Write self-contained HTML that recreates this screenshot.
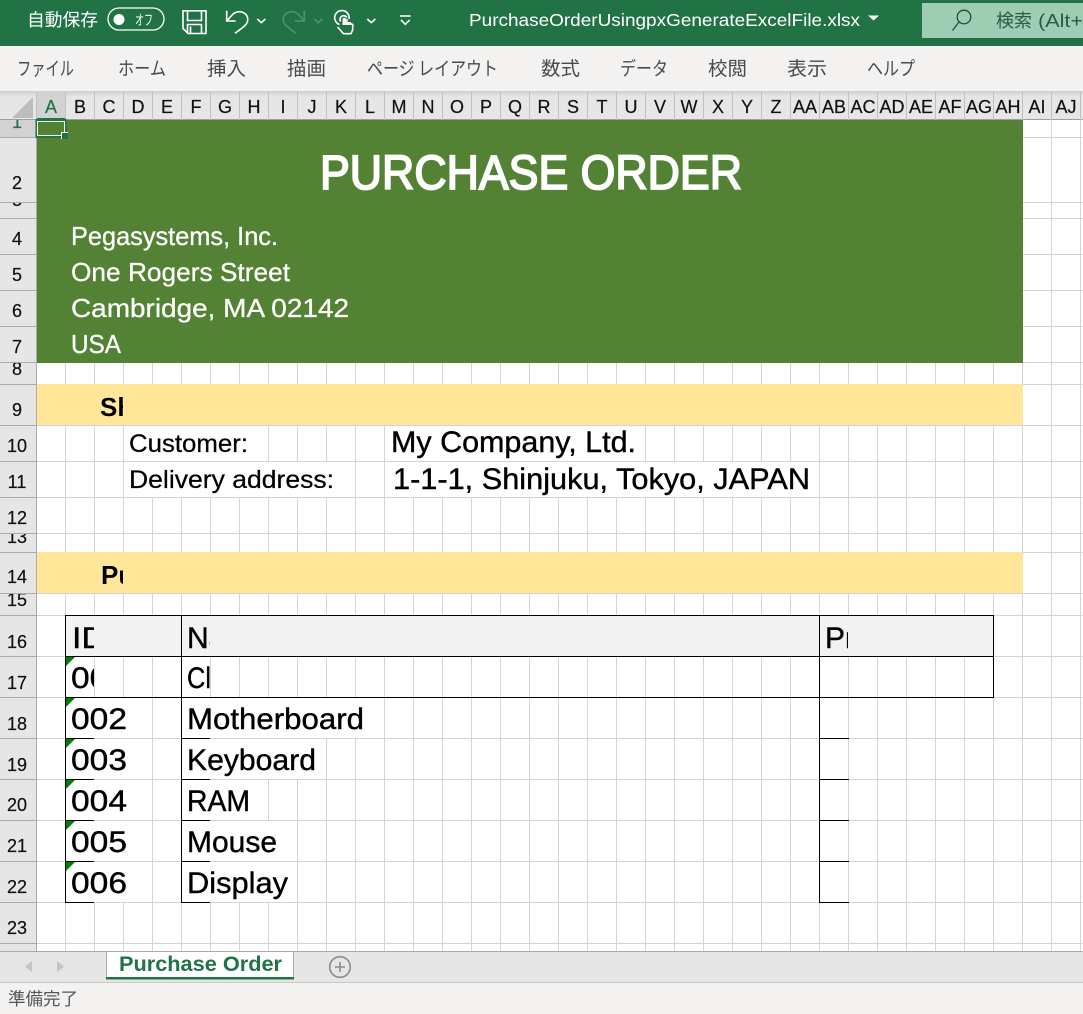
<!DOCTYPE html>
<html lang="ja">
<head>
<meta charset="utf-8">
<title>PurchaseOrderUsingpxGenerateExcelFile.xlsx</title>
<style>
html,body{margin:0;padding:0;background:#fff;width:1083px;height:1014px;overflow:hidden}
svg{display:block}
text{font-family:"Liberation Sans","Noto Sans CJK JP",sans-serif}
.jp{font-family:"Noto Sans CJK JP","Liberation Sans",sans-serif}
.tab{font-size:19px;fill:#4a4a4a;font-weight:400}
.col{font-size:18px;fill:#111;text-anchor:middle;stroke:#111;stroke-width:.2px}
.row{font-size:18px;fill:#111;text-anchor:middle;stroke:#111;stroke-width:.2px}
.addr{font-size:26px;fill:#fff;stroke:#fff;stroke-width:.3px}
.cell{font-size:30px;fill:#000;stroke:#000;stroke-width:.4px}
.lab{font-size:25px;fill:#000;stroke:#000;stroke-width:.25px}
.ico{fill:none;stroke:#fff;stroke-width:1.6}
</style>
</head>
<body>
<svg width="1083" height="1014" viewBox="0 0 1083 1014" xmlns="http://www.w3.org/2000/svg">
<defs>
<pattern id="vg" x="36" y="0" width="29" height="10" patternUnits="userSpaceOnUse"><rect x="29" y="0" width="1" height="10" fill="#d4d4d4"/><rect x="0" y="0" width="1" height="10" fill="#d4d4d4"/></pattern>
<linearGradient id="hd" x1="0" y1="0" x2="0" y2="1"><stop offset="0" stop-color="#cfcfcf"/><stop offset=".2" stop-color="#e6e6e6"/><stop offset="1" stop-color="#e6e6e6"/></linearGradient>
<clipPath id="c-sh"><rect x="95" y="385" width="28" height="40"/></clipPath>
<clipPath id="c-pu"><rect x="95" y="553" width="28" height="40"/></clipPath>
<clipPath id="c-a16"><rect x="66" y="616" width="28" height="40"/></clipPath>
<clipPath id="c-b16"><rect x="182" y="616" width="28" height="40"/></clipPath>
<clipPath id="c-c16"><rect x="820" y="616" width="28" height="40"/></clipPath>
<clipPath id="c-a17"><rect x="66" y="657" width="28" height="40"/></clipPath>
<clipPath id="c-b17"><rect x="182" y="657" width="28" height="40"/></clipPath>
<clipPath id="r1"><rect x="0" y="120" width="36" height="17"/></clipPath>
<clipPath id="r3"><rect x="0" y="203" width="36" height="15"/></clipPath>
<clipPath id="r8"><rect x="0" y="363" width="36" height="21"/></clipPath>
<clipPath id="r13"><rect x="0" y="534" width="36" height="18"/></clipPath>
<clipPath id="r15"><rect x="0" y="594" width="36" height="21"/></clipPath>
<clipPath id="c-search"><rect x="922" y="3" width="161" height="35"/></clipPath>
</defs>

<!-- Sheet grid -->
<rect x="36" y="120" width="1047" height="831" fill="#fff"/>
<rect x="37" y="120" width="1046" height="831" fill="url(#vg)"/>
<path d="M37 137.500H1083M37 202.500H1083M37 218.500H1083M37 254.500H1083M37 290.500H1083M37 326.500H1083M37 362.500H1083M37 384.500H1083M37 425.500H1083M37 461.500H1083M37 497.500H1083M37 533.500H1083M37 552.500H1083M37 593.500H1083M37 615.500H1083M37 656.500H1083M37 697.500H1083M37 738.500H1083M37 779.500H1083M37 820.500H1083M37 861.500H1083M37 902.500H1083M37 943.500H1083" stroke="#d4d4d4" stroke-width="1" fill="none"/>

<!-- Bands -->
<rect x="37" y="120" width="986" height="243" fill="#548235"/>
<rect x="37" y="384" width="986" height="41" fill="#ffe699"/>
<rect x="37" y="552" width="986" height="41" fill="#ffe699"/>

<!-- Overflow cells hide gridlines -->
<rect x="124" y="426" width="144" height="35" fill="#fff"/>
<rect x="124" y="462" width="231" height="35" fill="#fff"/>
<rect x="385" y="426" width="260" height="35" fill="#fff"/>
<rect x="385" y="462" width="434" height="35" fill="#fff"/>
<rect x="66" y="698" width="86" height="40" fill="#fff"/>
<rect x="66" y="739" width="86" height="40" fill="#fff"/>
<rect x="66" y="780" width="86" height="40" fill="#fff"/>
<rect x="66" y="821" width="86" height="40" fill="#fff"/>
<rect x="66" y="862" width="86" height="40" fill="#fff"/>
<rect x="182" y="698" width="181" height="40" fill="#fff"/>
<rect x="182" y="739" width="144" height="40" fill="#fff"/>
<rect x="182" y="780" width="86" height="40" fill="#fff"/>
<rect x="182" y="821" width="115" height="40" fill="#fff"/>
<rect x="182" y="862" width="115" height="40" fill="#fff"/>

<!-- Table -->
<rect x="66" y="616" width="927" height="40" fill="#f2f2f2"/>
<rect x="66" y="657" width="28" height="40" fill="#fff"/>
<rect x="182" y="657" width="28" height="40" fill="#fff"/>
<path d="M65 615.500H994M65 656.500H994M65 697.500H994M65.500 615V903M181.500 615V903M819.500 615V903M993.500 615V698M65 738.500H94M65 779.500H94M65 820.500H94M65 861.500H94M65 902.500H94M181 738.500H210M181 779.500H210M181 820.500H210M181 861.500H210M181 902.500H210M819 738.500H849M819 779.500H849M819 820.500H849M819 861.500H849M819 902.500H849" stroke="#000" stroke-width="1" fill="none"/>
<path d="M66 657h9l-9 9zM66 698h9l-9 9zM66 739h9l-9 9zM66 780h9l-9 9zM66 821h9l-9 9zM66 862h9l-9 9z" fill="#008000"/>

<!-- Sheet text -->
<text x="320" y="189" font-size="48" fill="#fff" stroke="#fff" stroke-width="1.800" textLength="422" lengthAdjust="spacingAndGlyphs">PURCHASE ORDER</text>
<text class="addr" x="71" y="245" textLength="207" lengthAdjust="spacingAndGlyphs">Pegasystems, Inc.</text>
<text class="addr" x="71" y="281" textLength="219" lengthAdjust="spacingAndGlyphs">One Rogers Street</text>
<text class="addr" x="71" y="317" textLength="278" lengthAdjust="spacingAndGlyphs">Cambridge, MA 02142</text>
<text class="addr" x="71" y="353" textLength="50" lengthAdjust="spacingAndGlyphs">USA</text>

<g clip-path="url(#c-sh)"><text x="100" y="416" font-size="26" font-weight="bold" fill="#000">Ship</text></g>
<g clip-path="url(#c-pu)"><text x="101" y="584" font-size="26" font-weight="bold" fill="#000">Pur</text></g>
<text class="lab" x="129" y="452" textLength="119" lengthAdjust="spacingAndGlyphs">Customer:</text>
<text class="lab" x="129" y="488" textLength="205" lengthAdjust="spacingAndGlyphs">Delivery address:</text>
<text class="cell" x="391" y="452" textLength="245" lengthAdjust="spacingAndGlyphs">My Company, Ltd.</text>
<text class="cell" x="393" y="489" textLength="417" lengthAdjust="spacingAndGlyphs">1-1-1, Shinjuku, Tokyo, JAPAN</text>

<g clip-path="url(#c-a16)"><text class="cell" x="72" y="648" textLength="34" lengthAdjust="spacingAndGlyphs">ID</text></g>
<g clip-path="url(#c-b16)"><text class="cell" x="187" y="648">Name</text></g>
<g clip-path="url(#c-c16)"><text class="cell" x="825" y="648">Price</text></g>
<g clip-path="url(#c-a17)"><text class="cell" x="71" y="688" textLength="56" lengthAdjust="spacingAndGlyphs">001</text></g>
<g clip-path="url(#c-b17)"><text class="cell" x="187" y="688" textLength="24" lengthAdjust="spacingAndGlyphs">Cl</text></g>
<text class="cell" x="71" y="729" textLength="56" lengthAdjust="spacingAndGlyphs">002</text>
<text class="cell" x="71" y="770" textLength="56" lengthAdjust="spacingAndGlyphs">003</text>
<text class="cell" x="71" y="811" textLength="56" lengthAdjust="spacingAndGlyphs">004</text>
<text class="cell" x="71" y="852" textLength="56" lengthAdjust="spacingAndGlyphs">005</text>
<text class="cell" x="71" y="893" textLength="56" lengthAdjust="spacingAndGlyphs">006</text>
<text class="cell" x="187" y="729" textLength="177" lengthAdjust="spacingAndGlyphs">Motherboard</text>
<text class="cell" x="187" y="770" textLength="129" lengthAdjust="spacingAndGlyphs">Keyboard</text>
<text class="cell" x="187" y="811" textLength="63" lengthAdjust="spacingAndGlyphs">RAM</text>
<text class="cell" x="187" y="852" textLength="90" lengthAdjust="spacingAndGlyphs">Mouse</text>
<text class="cell" x="187" y="893" textLength="101" lengthAdjust="spacingAndGlyphs">Display</text>

<!-- Row headers -->
<rect x="0" y="120" width="36" height="831" fill="#e6e6e6"/>
<rect x="0" y="120" width="36" height="17" fill="#d2d2d2"/>
<rect x="36" y="120" width="1" height="831" fill="#ababab"/>
<path d="M0 137.500H36M0 202.500H36M0 218.500H36M0 254.500H36M0 290.500H36M0 326.500H36M0 362.500H36M0 384.500H36M0 425.500H36M0 461.500H36M0 497.500H36M0 533.500H36M0 552.500H36M0 593.500H36M0 615.500H36M0 656.500H36M0 697.500H36M0 738.500H36M0 779.500H36M0 820.500H36M0 861.500H36M0 902.500H36M0 943.500H36" stroke="#ababab" stroke-width="1" fill="none"/>
<g clip-path="url(#r1)"><text class="row" x="17" y="128" style="fill:#217346;stroke:#217346">1</text></g>
<text class="row" x="17" y="189">2</text>
<g clip-path="url(#r3)"><text class="row" x="17" y="206">3</text></g>
<text class="row" x="17" y="245">4</text>
<text class="row" x="17" y="281">5</text>
<text class="row" x="17" y="317">6</text>
<text class="row" x="17" y="353">7</text>
<g clip-path="url(#r8)"><text class="row" x="17" y="375">8</text></g>
<text class="row" x="17" y="416">9</text>
<text class="row" x="17" y="452">10</text>
<text class="row" x="17" y="488">11</text>
<text class="row" x="17" y="524">12</text>
<g clip-path="url(#r13)"><text class="row" x="17" y="543">13</text></g>
<text class="row" x="17" y="583">14</text>
<g clip-path="url(#r15)"><text class="row" x="17" y="606">15</text></g>
<text class="row" x="17" y="648">16</text>
<text class="row" x="17" y="689">17</text>
<text class="row" x="17" y="730">18</text>
<text class="row" x="17" y="771">19</text>
<text class="row" x="17" y="811">20</text>
<text class="row" x="17" y="852">21</text>
<text class="row" x="17" y="893">22</text>
<text class="row" x="17" y="934">23</text>

<!-- Column headers -->
<rect x="0" y="91" width="1083" height="29" fill="url(#hd)"/>
<rect x="37" y="92" width="28" height="28" fill="#d2d2d2"/>
<path d="M33 97V118H12Z" fill="#bcbcbc"/>
<rect x="0" y="119" width="1083" height="1" fill="#9e9e9e"/>
<rect x="37" y="118" width="28" height="2" fill="#217346"/>
<path d="M36.500 92V120M65.500 92V120M94.500 92V120M123.500 92V120M152.500 92V120M181.500 92V120M210.500 92V120M239.500 92V120M268.500 92V120M297.500 92V120M326.500 92V120M355.500 92V120M384.500 92V120M413.500 92V120M442.500 92V120M471.500 92V120M500.500 92V120M529.500 92V120M558.500 92V120M587.500 92V120M616.500 92V120M645.500 92V120M674.500 92V120M703.500 92V120M732.500 92V120M761.500 92V120M790.500 92V120M819.500 92V120M848.500 92V120M877.500 92V120M906.500 92V120M935.500 92V120M964.500 92V120M993.500 92V120M1022.500 92V120M1051.500 92V120M1080.500 92V120" stroke="#c0c0c0" stroke-width="1" fill="none"/>
<text class="col" x="51" y="113" style="fill:#217346;stroke:#217346">A</text>
<text class="col" x="80" y="113">B</text>
<text class="col" x="109" y="113">C</text>
<text class="col" x="138" y="113">D</text>
<text class="col" x="167" y="113">E</text>
<text class="col" x="196" y="113">F</text>
<text class="col" x="225" y="113">G</text>
<text class="col" x="254" y="113">H</text>
<text class="col" x="283" y="113">I</text>
<text class="col" x="312" y="113">J</text>
<text class="col" x="341" y="113">K</text>
<text class="col" x="370" y="113">L</text>
<text class="col" x="399" y="113">M</text>
<text class="col" x="428" y="113">N</text>
<text class="col" x="457" y="113">O</text>
<text class="col" x="486" y="113">P</text>
<text class="col" x="515" y="113">Q</text>
<text class="col" x="544" y="113">R</text>
<text class="col" x="573" y="113">S</text>
<text class="col" x="602" y="113">T</text>
<text class="col" x="631" y="113">U</text>
<text class="col" x="660" y="113">V</text>
<text class="col" x="689" y="113">W</text>
<text class="col" x="718" y="113">X</text>
<text class="col" x="747" y="113">Y</text>
<text class="col" x="776" y="113">Z</text>
<text class="col" x="805" y="113">AA</text>
<text class="col" x="834" y="113">AB</text>
<text class="col" x="863" y="113">AC</text>
<text class="col" x="892" y="113">AD</text>
<text class="col" x="921" y="113">AE</text>
<text class="col" x="950" y="113">AF</text>
<text class="col" x="979" y="113">AG</text>
<text class="col" x="1008" y="113">AH</text>
<text class="col" x="1037" y="113">AI</text>
<text class="col" x="1066" y="113">AJ</text>

<!-- Selection -->
<rect x="36.500" y="120" width="29" height="17" fill="none" stroke="#217346" stroke-width="2"/>
<rect x="37.500" y="121.500" width="27" height="14" fill="none" stroke="#fff" stroke-width="1"/>
<path d="M61 139V132H68V133H62V139Z" fill="#fff"/>
<rect x="62" y="133" width="6" height="6" fill="#217346"/>

<!-- Title bar -->
<rect x="0" y="0" width="1083" height="46" fill="#217346"/>
<text class="jp" x="27" y="26" font-size="17.500" fill="#fff" textLength="71" lengthAdjust="spacingAndGlyphs">自動保存</text>
<rect x="108" y="8" width="56" height="22" rx="11" fill="none" stroke="#fff" stroke-width="1.300"/>
<circle cx="119" cy="19.500" r="5.500" fill="#fff"/>
<text class="jp" x="135" y="25" font-size="14" fill="#fff" textLength="18" lengthAdjust="spacingAndGlyphs">オフ</text>
<path class="ico" d="M183 10.800H206V33.500H188L183 28.500ZM187.500 11V20.500H201.500V11M187.500 33V24.500H201.500V33M190.500 33V26.500"/>
<path class="ico" d="M226.700 10.700V21H235.700M226.700 21L233 14C240 9 248 13 247.700 20C247.500 24 245 26 235 33.300"/>
<path class="ico" stroke-width="1.800" d="M257.300 19L261.300 22.700L265.300 19"/>
<path class="ico" style="stroke:#4f9470" d="M304.300 10.700V21H295M304.300 21L298 14C291 9 283 13 283.300 20C283.500 24 286 26 296 33.300"/>
<path class="ico" style="stroke:#4f9470" stroke-width="1.800" d="M314.300 19L318.300 22.700L322.300 19"/>
<path class="ico" d="M339.500 24.500A7.200 7.200 0 1 1 349 19"/>
<path class="ico" d="M340.500 21.500A3.700 3.700 0 1 1 347 17.500"/>
<path class="ico" d="M337.500 27L343.500 33.700H351L352.700 30V24.500L347 22.500V19"/>
<path d="M342.500 28V19.500A1.700 1.700 0 0 1 346 19.500V22H351V25H342.500Z" fill="#fff"/>
<path class="ico" stroke-width="1.800" d="M367.300 19L371.300 22.700L375.300 19"/>
<path class="ico" stroke-width="1.800" d="M400 16H410.700M401 20L405.300 24.300L409.700 20"/>
<text x="469" y="26" font-size="17.500" fill="#fff" textLength="391" lengthAdjust="spacingAndGlyphs">PurchaseOrderUsingpxGenerateExcelFile.xlsx</text>
<path d="M868 15.500H879L873.500 20.500Z" fill="#fff"/>
<rect x="922" y="3" width="161" height="35" fill="#9fcdb3"/>
<circle cx="964" cy="17" r="6.800" fill="none" stroke="#1f4f36" stroke-width="1.300"/>
<path d="M959 22L952.500 30.500" stroke="#1f4f36" stroke-width="1.300" fill="none"/>
<g clip-path="url(#c-search)">
<text class="jp" x="996" y="27" font-size="18" fill="#2b5b42">検索</text>
<text x="1038" y="27" font-size="18" fill="#2b5b42" textLength="45" lengthAdjust="spacingAndGlyphs">(Alt+</text>
</g>

<!-- Ribbon tabs -->
<rect x="0" y="46" width="1083" height="45" fill="#f3f2f1"/>
<text class="jp tab" x="17" y="75" textLength="57" lengthAdjust="spacingAndGlyphs">ファイル</text>
<text class="jp tab" x="118" y="75" textLength="48" lengthAdjust="spacingAndGlyphs">ホーム</text>
<text class="jp tab" x="207" y="75" textLength="39" lengthAdjust="spacingAndGlyphs">挿入</text>
<text class="jp tab" x="287" y="75" textLength="39" lengthAdjust="spacingAndGlyphs">描画</text>
<text class="jp tab" x="367" y="75" textLength="131" lengthAdjust="spacingAndGlyphs">ページ レイアウト</text>
<text class="jp tab" x="541" y="75" textLength="39" lengthAdjust="spacingAndGlyphs">数式</text>
<text class="jp tab" x="620" y="75" textLength="48" lengthAdjust="spacingAndGlyphs">データ</text>
<text class="jp tab" x="708" y="75" textLength="39" lengthAdjust="spacingAndGlyphs">校閲</text>
<text class="jp tab" x="787" y="75" textLength="40" lengthAdjust="spacingAndGlyphs">表示</text>
<text class="jp tab" x="867" y="75" textLength="48" lengthAdjust="spacingAndGlyphs">ヘルプ</text>

<!-- Sheet tabs -->
<rect x="0" y="951" width="1083" height="31" fill="#e6e6e6"/>
<rect x="0" y="951" width="1083" height="1" fill="#ababab"/>
<path d="M32 961V972L25 966.500ZM57 961V972L64 966.500Z" fill="#c4c4c4"/>
<path d="M106.500 978V951.500H293.500V978" fill="#fff" stroke="#ababab" stroke-width="1"/>
<rect x="106" y="977" width="188" height="2.500" fill="#217346"/>
<text x="119" y="971" font-size="21" font-weight="bold" fill="#217346" textLength="163" lengthAdjust="spacingAndGlyphs">Purchase Order</text>
<circle cx="340" cy="967" r="10.300" fill="none" stroke="#8a8a8a" stroke-width="1.600"/>
<path d="M335 967H345M340 962V972" stroke="#8a8a8a" stroke-width="1.600" fill="none"/>

<!-- Status bar -->
<rect x="0" y="982" width="1083" height="32" fill="#f3f2f1"/>
<rect x="0" y="982" width="1083" height="1" fill="#c8c8c8"/>
<text class="jp" x="8" y="1005" font-size="17.500" fill="#555" textLength="70" lengthAdjust="spacingAndGlyphs">準備完了</text>
</svg>
</body>
</html>
